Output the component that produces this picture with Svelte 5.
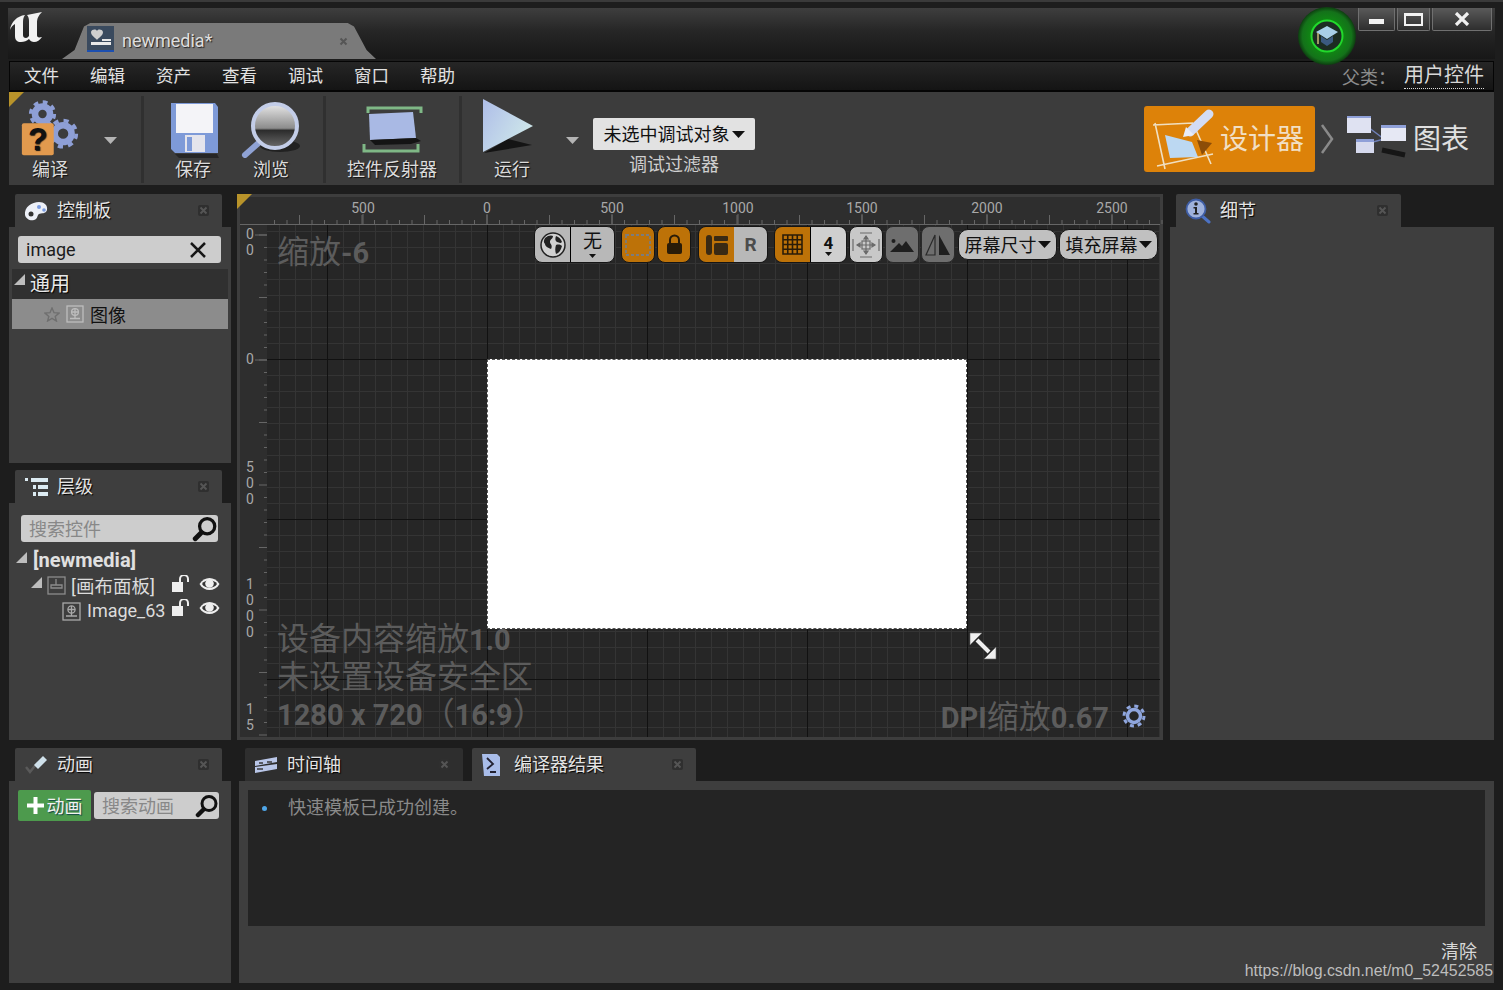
<script>
	const menus = ["文件", "编辑", "资产", "查看", "调试", "窗口", "帮助"];

	// rulers: 500 units = 125px, origin at x=487 / y=359 on the page
	const hTicks = [];
	for (let x = 250 - 12.5 * 17; x < 926; x += 12.5) {
		hTicks.push(x);
	}
	const hLabels = [
		{ x: 126, t: "500" },
		{ x: 250, t: "0" },
		{ x: 375, t: "500" },
		{ x: 501, t: "1000" },
		{ x: 625, t: "1500" },
		{ x: 750, t: "2000" },
		{ x: 875, t: "2500" }
	];
	const vTicks = [];
	for (let y = 135 - 12.5 * 10; y < 512; y += 12.5) {
		vTicks.push(y);
	}
	const vLabels = [
		{ y: 9, t: "0" },
		{ y: 25, t: "0" },
		{ y: 134, t: "0" },
		{ y: 242, t: "5" },
		{ y: 258, t: "0" },
		{ y: 274, t: "0" },
		{ y: 359, t: "1" },
		{ y: 375, t: "0" },
		{ y: 391, t: "0" },
		{ y: 407, t: "0" },
		{ y: 484, t: "1" },
		{ y: 500, t: "5" }
	];
</script>

{#snippet closeX()}
	<svg class="tabx" width="11" height="11" viewBox="0 0 11 11">
		<rect width="11" height="11" rx="2" fill="#2f2f2f" />
		<path d="M2.500 2.500l6 6M8.500 2.500l-6 6" stroke="#555" stroke-width="2" />
	</svg>
{/snippet}

{#snippet imgIcon()}
	<svg width="19" height="19" viewBox="0 0 19 19" fill="none" stroke="#a9a9a9" stroke-width="1.300">
		<rect x="1" y="1" width="17" height="17" />
		<circle cx="9.500" cy="7.500" r="3.600" />
		<path d="M6 7.500h7M9.500 4v7M9.500 11v2.500M4 14h11" />
	</svg>
{/snippet}

{#snippet lock()}
	<svg width="20" height="18" viewBox="0 0 20 18">
		<rect x="1" y="7" width="11" height="10" fill="#eee" />
		<path d="M9 7V4a4 4 0 0 1 8 0v3" fill="none" stroke="#eee" stroke-width="2" />
	</svg>
{/snippet}

{#snippet eye()}
	<svg width="21" height="16" viewBox="0 0 21 16">
		<path d="M0.500 8C5 0 16 0 20.500 8C16 16 5 16 0.500 8Z" fill="#eee" />
		<path d="M3 8C6 3 15 3 18 8C15 13 6 13 3 8Z" fill="#333" />
		<circle cx="10.500" cy="7.500" r="4.300" fill="#eee" />
	</svg>
{/snippet}

{#snippet loupe(size)}
	<svg width={size} height={size} viewBox="0 0 24 24" fill="none" stroke="#111">
		<circle cx="14" cy="9.500" r="7" stroke-width="3" />
		<path d="M8.500 15.500L3 21" stroke-width="4.500" stroke-linecap="round" />
	</svg>
{/snippet}

{#snippet caret()}
	<svg width="13" height="7" viewBox="0 0 13 7"><path d="M0 0h13L6.500 7z" fill="#111" /></svg>
{/snippet}

{#snippet expander()}
	<svg class="exp" width="11" height="11" viewBox="0 0 11 11"><path d="M11 0v11H0z" fill="#bdbdbd" /></svg>
{/snippet}

<div class="window">
	<header class="titlebar">
		<svg class="logo" width="38" height="32" viewBox="0 0 38 32">
			<path
				d="M1 19C2 11 8 5 16 4C14 7 14 9 14 12V24C14 26 15 27 17 27C18 27 19 26 20 25V10C20 7 19 5 18 4L33 1C29 5 28 8 28 12V24C28 26 29 27 33 26C31 29 28 31 25 31C23 31 21 30 20 28C18 30 15 31 12 31C8 31 6 29 6 25V13C4 14 2 16 1 19Z"
				fill="#f2f2f2"
			/>
		</svg>
		<div class="doctab">
			<svg width="27" height="26" viewBox="0 0 27 26">
				<rect width="27" height="26" fill="#3a4a5e" />
				<rect y="24" width="27" height="2" fill="#1c4fb0" />
				<path d="M4 6c1-3 5-3 6-1 1-2 5-2 6 1 0 4-5 6-6 8-1-2-6-4-6-8z" fill="#cfcfcf" />
				<path d="M15 13h9v2h-9zM4 16h20v3H4z" fill="#e8e8e8" />
			</svg>
			<span class="docname">newmedia*</span>
			{@render closeX()}
		</div>
		<div class="tutorial">
			<svg width="60" height="60" viewBox="0 0 60 60">
				<defs>
					<radialGradient id="halo">
						<stop offset="0.5" stop-color="#0f8a12" />
						<stop offset="0.85" stop-color="#14721a" />
						<stop offset="1" stop-color="#0d3d10" />
					</radialGradient>
				</defs>
				<circle cx="30" cy="30" r="29" fill="url(#halo)" />
				<circle cx="30" cy="30" r="15.500" fill="#1c2c22" stroke="#22d82c" stroke-width="2" />
				<path d="M19 26l11-6 11 6-11 7z" fill="#a8cfe8" />
				<path d="M24 30v6l6 4 6-4v-6l-6 4z" fill="#3b5a80" />
				<path d="M21 27v11" stroke="#c8b878" stroke-width="1.500" />
			</svg>
		</div>
		<div class="winbtns">
			<button class="wb min"><i></i></button>
			<button class="wb max"><i></i></button>
			<button class="wb close">
				<svg width="16" height="14" viewBox="0 0 16 14"><path d="M2 1l12 12M14 1L2 13" stroke="#f0f0f0" stroke-width="3.200" /></svg>
			</button>
		</div>
	</header>

	<nav class="menubar">
		{#each menus as m}
			<span class="menu">{m}</span>
		{/each}
		<span class="parent">父类：</span>
		<span class="parentval">用户控件</span>
	</nav>

	<section class="toolbar">
		<i class="corner"></i>
		<div class="tool compile">
			<svg width="60" height="60" viewBox="0 0 64 60">
				<g fill="none" stroke="#8e9fd6">
					<circle cx="24" cy="15" r="8" stroke-width="7" />
					<circle cx="24" cy="15" r="12.500" stroke-width="4" stroke-dasharray="5 4.800" />
					<circle cx="46" cy="36" r="9" stroke-width="7" />
					<circle cx="46" cy="36" r="14" stroke-width="4" stroke-dasharray="5.500 5.500" />
				</g>
				<rect x="2" y="25" width="34" height="34" rx="2" fill="#e29a4e" />
				<text x="19" y="53" text-anchor="middle" class="qmark">?</text>
			</svg>
			<span>编译</span>
		</div>
		<svg class="drop" width="13" height="7" viewBox="0 0 13 7"><path d="M0 0h13L6.500 7z" fill="#b4b4b4" /></svg>
		<i class="sep s1"></i>
		<div class="tool save">
			<svg width="52" height="56" viewBox="0 0 52 56">
				<path d="M4 1h44l3 4v46H8l-4-4z" fill="#7e9ad8" />
				<rect x="9" y="2" width="37" height="29" fill="#f4f4f8" />
				<rect x="18" y="33" width="20" height="17" fill="#e4e4ec" />
				<rect x="20" y="35" width="5" height="14" fill="#7e9ad8" />
				<path d="M8 52h42l2 4H12z" fill="#1c1c1c" opacity="0.700" />
			</svg>
			<span>保存</span>
		</div>
		<div class="tool browse">
			<svg width="62" height="56" viewBox="0 0 62 56">
				<defs>
					<linearGradient id="lens" x1="0" y1="0" x2="0" y2="1">
						<stop offset="0" stop-color="#e8e8e8" />
						<stop offset="0.550" stop-color="#8c8c8c" />
						<stop offset="0.600" stop-color="#2c2c2c" />
						<stop offset="1" stop-color="#6c6c6c" />
					</linearGradient>
				</defs>
				<ellipse cx="40" cy="44" rx="20" ry="6" fill="#1a1a1a" opacity="0.800" />
				<path d="M5 53l17-15" stroke="#8fa2d4" stroke-width="6" stroke-linecap="round" />
				<circle cx="35" cy="24" r="22" fill="url(#lens)" stroke="#c3cde8" stroke-width="4" />
			</svg>
			<span>浏览</span>
		</div>
		<i class="sep s2"></i>
		<div class="tool reflector">
			<svg width="62" height="56" viewBox="0 0 62 56">
				<path d="M7 11V6h53v5" fill="none" stroke="#7fb886" stroke-width="3" />
				<path d="M3 42v7h54v-7" fill="none" stroke="#7fb886" stroke-width="3" />
				<path d="M8 12l44-2 3 26-46 2z" fill="#a9b9e4" />
				<path d="M9 38l46-2 5 3-10 3-36 1z" fill="#141414" />
			</svg>
			<span>控件反射器</span>
		</div>
		<i class="sep s3"></i>
		<div class="tool run">
			<svg width="52" height="58" viewBox="0 0 52 58">
				<defs>
					<linearGradient id="play" x1="0" y1="0" x2="1" y2="0.600">
						<stop offset="0" stop-color="#aebde8" />
						<stop offset="1" stop-color="#cfe8ea" />
					</linearGradient>
				</defs>
				<path d="M2 55l48-8-24-6z" fill="#141414" />
				<path d="M1 1l50 27L1 54z" fill="url(#play)" />
			</svg>
			<span>运行</span>
		</div>
		<svg class="drop d2" width="13" height="7" viewBox="0 0 13 7"><path d="M0 0h13L6.500 7z" fill="#b4b4b4" /></svg>
		<div class="debug">
			<button class="debugsel"><span class="lift">未选中调试对象</span>{@render caret()}</button>
			<span>调试过滤器</span>
		</div>

		<div class="modes">
			<div class="mode designer">
				<svg width="62" height="66" viewBox="0 0 62 66">
					<path d="M0 19l40-2M2 17l10 46M4 60l56-12M40 17l18 41" stroke="#f0dfc0" stroke-width="1.600" fill="none" />
					<path d="M12 29l27 7 6 15-28 1z" fill="#bcd8f2" />
					<path d="M44 34l15 3-10 12z" fill="#8c4d08" />
					<path d="M37 26L56 8" stroke="#d3dcf4" stroke-width="9" stroke-linecap="round" />
					<path d="M30 31l3-10 8 8z" fill="#e8ecf8" />
				</svg>
				<span class="modet">设计器</span>
			</div>
			<svg class="chev" width="14" height="30" viewBox="0 0 14 30"><path d="M2 1l10 14L2 29" fill="none" stroke="#8a8a8a" stroke-width="2.500" /></svg>
			<div class="mode graph">
				<svg width="62" height="44" viewBox="0 0 62 44">
					<path d="M22 12l16 12M16 30l22-6" stroke="#6f80b8" stroke-width="1.500" />
					<path d="M36 35l23 5" stroke="#161616" stroke-width="5" />
					<rect x="1" y="1" width="24" height="17" fill="#dfe2f2" />
					<rect x="1" y="1" width="24" height="2" fill="#8fa0d8" />
					<rect x="35" y="10" width="25" height="16" fill="#e6e8f4" />
					<rect x="35" y="10" width="25" height="3" fill="#8fa0d8" />
					<rect x="10" y="24" width="18" height="14" fill="#d6daee" />
					<rect x="10" y="24" width="18" height="3" fill="#8fa0d8" />
				</svg>
				<span class="modet">图表</span>
			</div>
		</div>
	</section>

	<main class="columns">
		<div class="leftcol">
			<section class="panel palette">
				<div class="tabrow">
					<div class="tab">
						<svg width="24" height="20" viewBox="0 0 24 20">
							<path d="M1 14C0 6 8 1 15 1c5 0 9 3 8 8-1 4-6 3-8 4-2 1-1 5-5 6-4 1-8-1-9-5z" fill="#edf0f8" />
							<circle cx="15" cy="6" r="2" fill="#7a9be0" />
							<circle cx="20" cy="9" r="1.800" fill="#7a9be0" />
							<circle cx="7" cy="13" r="2.500" fill="#333" />
						</svg>
						<span class="tabt">控制板</span>
						{@render closeX()}
					</div>
				</div>
				<div class="body">
					<div class="search s-palette">
						<span class="val">image</span>
						<svg width="18" height="18" viewBox="0 0 18 18"><path d="M2 2l14 14M16 2L2 16" stroke="#161616" stroke-width="2.500" /></svg>
					</div>
					<div class="cat">{@render expander()}<span>通用</span></div>
					<div class="item">
						<svg width="16" height="15" viewBox="0 0 16 15"><path d="M8 1l2 4.700 5 .4-3.800 3.300L12.400 14 8 11.400 3.600 14l1.200-4.600L1 6.100l5-.4z" fill="none" stroke="#6f6f6f" stroke-width="1.400" /></svg>
						<svg width="18" height="18" viewBox="0 0 18 18" fill="none" stroke="#bdbdbd" stroke-width="1.300">
							<rect x="1" y="1" width="16" height="16" />
							<circle cx="9" cy="7" r="3.400" />
							<path d="M5.500 7h7M9 3.600v7M9 10.500v2.500M4 13.500h10" />
						</svg>
						<span>图像</span>
					</div>
				</div>
			</section>

			<section class="panel hierarchy">
				<div class="tabrow">
					<div class="tab">
						<svg width="24" height="20" viewBox="0 0 24 20">
							<path d="M1 1h3v3H1zM7 1h17v4H7zM9 8h3v4H9zM14 8h10v4H14zM9 15h3v4H9zM14 15h10v4H14z" fill="#dcebf2" />
						</svg>
						<span class="tabt">层级</span>
						{@render closeX()}
					</div>
				</div>
				<div class="body">
					<div class="search s-tree">
						<span class="ph">搜索控件</span>
						{@render loupe(26)}
					</div>
					<div class="row root">{@render expander()}<b>[newmedia]</b></div>
					<div class="row child">
						{@render expander()}
						<svg width="19" height="19" viewBox="0 0 19 19" fill="none" stroke="#8c8c8c" stroke-width="1.300">
							<rect x="1" y="1" width="17" height="17" />
							<path d="M4 9h11v3H4zM9 3v6" />
						</svg>
						<span class="lift">[画布面板]</span>
						<em class="rowicons">{@render lock()}{@render eye()}</em>
					</div>
					<div class="row leaf">
						{@render imgIcon()}
						<span class="lift">Image_63</span>
						<em class="rowicons">{@render lock()}{@render eye()}</em>
					</div>
				</div>
			</section>
		</div>

		<section class="designer-panel">
			<i class="corner"></i>
			<div class="hruler">
				<svg width="926" height="29">
					{#each hTicks as x, i}
						<line x1={x} x2={x} y1={i % 5 === 2 ? 20 : 25} y2="29" stroke="#666" />
					{/each}
					{#each hLabels as l}
						<line x1={l.x} x2={l.x} y1="19" y2="29" stroke="#666" />
						<text x={l.x} y="18" text-anchor="middle" class="rl">{l.t}</text>
					{/each}
				</svg>
			</div>
			<div class="stage">
				<div class="vruler">
					<svg width="27" height="512">
						{#each vTicks as y, i}
							<line x1={i % 5 === 0 ? 19 : 24} x2="27" y1={y} y2={y} stroke="#666" />
						{/each}
						{#each vLabels as l}
							<text x="10" y={l.y + 5} text-anchor="middle" class="rl">{l.t}</text>
						{/each}
						<line x1="15" x2="27" y1="10" y2="10" stroke="#666" />
						<line x1="15" x2="27" y1="135" y2="135" stroke="#666" />
					</svg>
				</div>
				<div class="viewport">
					<div class="screen"></div>
					<svg class="resize" width="28" height="28" viewBox="0 0 28 28">
						<path d="M8 8L20 20" stroke="#f0f0f0" stroke-width="4" />
						<path d="M1 1h12L1 13zM27 27H15L27 15z" fill="#f0f0f0" stroke="#666" stroke-width="0.600" />
					</svg>
					<div class="zoomtxt">缩放<b>-6</b></div>
					<div class="infotxt">
						<div>设备内容缩放<b>1.0</b></div>
						<div>未设置设备安全区</div>
						<div><b>1280 x 720</b>（<b>16:9</b>）</div>
					</div>
					<div class="dpi">
						<span><b>DPI</b>缩放<b>0.67</b></span>
						<svg width="24" height="24" viewBox="0 0 24 24" fill="none" stroke="#8fa6de">
							<circle cx="12" cy="12" r="6.500" stroke-width="3.500" />
							<circle cx="12" cy="12" r="10" stroke-width="3" stroke-dasharray="4 3.850" />
						</svg>
					</div>

					<div class="vpbar">
						<div class="vb light split w81">
							<span class="seg sw">
								<svg width="28" height="28" viewBox="0 0 28 28">
									<circle cx="14" cy="14" r="12" fill="#d0d0d0" stroke="#222" stroke-width="1.500" />
									<path d="M6 7c3-3 7-3 8-2 0 3-3 3-3 6 0 2 3 3 1 7-3-1-6-3-6-5-2-2-1-4 0-6zM17 5c3 1 5 3 6 6-2 2-3 0-5 0-2-1-2-4-1-6zM17 14c3-1 5 0 6 1-1 4-3 7-6 8-1-3-1-6 0-9z" fill="#222" />
								</svg>
							</span>
							<span class="seg sn"><span class="nv">无</span><svg width="7" height="4" viewBox="0 0 7 4"><path d="M0 0h7L3.500 4z" fill="#111" /></svg></span>
						</div>
						<div class="vb on sq g6">
							<svg width="28" height="24" viewBox="0 0 28 24"><rect x="2" y="2" width="24" height="20" fill="none" stroke="#7c7c7c" stroke-width="1.800" stroke-dasharray="3 2" /></svg>
						</div>
						<div class="vb on sq">
							<svg width="17" height="21" viewBox="0 0 17 21"><path d="M4 9V6a4.500 4.500 0 0 1 9 0v3" fill="none" stroke="#2a1c08" stroke-width="2" /><rect x="1" y="9" width="15" height="11" rx="2" fill="#2a1c08" /></svg>
						</div>
						<div class="vb split w70 g7">
							<span class="seg on s-35">
								<svg width="24" height="22" viewBox="0 0 24 22" fill="#3a2a14"><rect x="1" y="1" width="6" height="20" rx="3" /><rect x="9" y="2" width="14" height="5" rx="1" /><rect x="9" y="9" width="14" height="12" rx="2" /></svg>
							</span>
							<span class="seg light s-r">R</span>
						</div>
						<div class="vb split w73 g6">
							<span class="seg on s-36">
								<svg width="21" height="21" viewBox="0 0 21 21" fill="none" stroke="#2a1c08" stroke-width="1.600"><path d="M1 1h19v19H1zM5.750 1v19M10.500 1v19M15.250 1v19M1 5.750h19M1 10.500h19M1 15.250h19" /></svg>
							</span>
							<span class="seg s-n"><b>4</b><svg width="7" height="4" viewBox="0 0 7 4"><path d="M0 0h7L3.500 4z" fill="#111" /></svg></span>
						</div>
						<div class="vb pale sq">
							<svg width="28" height="26" viewBox="0 0 28 26" fill="none" stroke="#6a6a6a" stroke-width="1.200">
								<path d="M1 7v12M27 7v12M8 1h12M8 25h12M14 4v18M5 13h18" />
								<path d="M14 4l-2 3h4zM14 22l-2-3h4zM5 13l3-2v4zM23 13l-3-2v4z" fill="#6a6a6a" />
								<rect x="10" y="9" width="8" height="8" />
							</svg>
						</div>
						<div class="vb dim sq">
							<svg width="24" height="14" viewBox="0 0 24 14"><path d="M0 14L9 5l3 3 4-5 8 11z" fill="#1f1f1f" /><circle cx="3.500" cy="3" r="2" fill="#1f1f1f" /></svg>
						</div>
						<div class="vb dim sq">
							<svg width="26" height="22" viewBox="0 0 26 22"><path d="M10 1v20H1z" fill="none" stroke="#2a2a2a" stroke-width="1.200" /><path d="M14 1l11 20H14z" fill="#1f1f1f" /></svg>
						</div>
						<div class="vb light pill g3"><span class="lift">屏幕尺寸</span>{@render caret()}</div>
						<div class="vb light pill"><span class="lift">填充屏幕</span>{@render caret()}</div>
					</div>
				</div>
			</div>
		</section>

		<section class="panel details">
			<div class="tabrow">
				<div class="tab">
					<svg width="26" height="26" viewBox="0 0 26 26">
						<path d="M16 17l8 7" stroke="#4c72c4" stroke-width="3" stroke-linecap="round" />
						<circle cx="11" cy="11" r="9.500" fill="#9fb2dc" stroke="#3f5ea6" stroke-width="1.800" />
						<circle cx="11" cy="6" r="1.800" fill="#222" />
						<path d="M8.500 9h3.500v6h1.500v1.500H8.500V15H10v-4.500H8.500z" fill="#222" />
					</svg>
					<span class="tabt">细节</span>
					{@render closeX()}
				</div>
			</div>
			<div class="body"></div>
		</section>
	</main>

	<footer class="bottom">
		<section class="panel anim">
			<div class="tabrow">
				<div class="tab">
					<svg width="24" height="20" viewBox="0 0 24 20">
						<path d="M2 12l4 5L14 7" fill="none" stroke="#5a5a5a" stroke-width="2.500" />
						<path d="M10 10l9-9 4 4-9 9z" fill="#cfe0ea" />
					</svg>
					<span class="tabt">动画</span>
					{@render closeX()}
				</div>
			</div>
			<div class="body">
				<div class="animbar">
					<button class="addanim">
						<svg width="17" height="17" viewBox="0 0 17 17"><path d="M6.500 0h4v6.500H17v4h-6.500V17h-4v-6.500H0v-4h6.500z" fill="#fff" /></svg>
						<span class="lift">动画</span>
					</button>
					<div class="search s-anim">
						<span class="ph">搜索动画</span>
						{@render loupe(24)}
					</div>
				</div>
			</div>
		</section>

		<section class="panel output">
			<div class="tabrow">
				<div class="tab off">
					<svg width="24" height="18" viewBox="0 0 24 18">
						<path d="M1 5l22-4v5l-22 4zM1 11l22-3v5l-22 4z" fill="#b9c6e8" />
						<path d="M5 7h4M13 6h5M3 13h6" stroke="#3a3a3a" stroke-width="1.500" />
					</svg>
					<span class="tabt">时间轴</span>
					{@render closeX()}
				</div>
				<div class="tab wide">
					<svg width="20" height="24" viewBox="0 0 20 24">
						<path d="M1 1h15l3 3v19H3z" fill="#a9bdea" />
						<path d="M6 5l6 6-6 5M9 19h6" fill="none" stroke="#223" stroke-width="1.800" />
					</svg>
					<span class="tabt">编译器结果</span>
					{@render closeX()}
				</div>
			</div>
			<div class="body">
				<div class="log">
					<i class="dot"></i>
					<span>快速模板已成功创建。</span>
				</div>
				<div class="clear">清除</div>
				<div class="url">https://blog.csdn.net/m0_52452585</div>
			</div>
		</section>
	</footer>
</div>

<style>
	:global(body) {
		margin: 0;
		background: #1c1c1c;
	}
	.window {
		width: 1503px;
		height: 990px;
		overflow: hidden;
		box-sizing: border-box;
		padding: 0 9px 7px;
		background: #1d1d1d;
		border-top: 2px solid #3a3a3a;
		font-family: "Roboto", "Noto Sans CJK SC", sans-serif;
		color: #ddd;
	}
	.window i,
	.window em {
		font-style: normal;
	}
	button {
		font: inherit;
		border: 0;
		padding: 0;
	}
	.lift {
		padding-bottom: 2px;
	}

	/* title bar */
	.titlebar {
		position: relative;
		height: 51px;
		margin: 6px -1px 0;
		padding-left: 1px;
		display: flex;
		align-items: flex-end;
		background: linear-gradient(#3e3e3e, #262626 45%, #171717);
	}
	.logo {
		align-self: flex-start;
		margin-top: 3px;
	}
	.doctab {
		width: 314px;
		height: 36px;
		margin-left: 15px;
		box-sizing: border-box;
		padding: 3px 0 0 25px;
		display: flex;
		align-items: flex-start;
		background: #7a7a7a;
		clip-path: polygon(0 100%, 4% 75%, 7% 10%, 9% 0, 91% 0, 93% 10%, 97% 75%, 100% 100%);
	}
	.docname {
		margin: 4px 0 0 8px;
		font-size: 18px;
		color: #dedede;
		text-shadow: 1px 1px 1px #222;
		flex: 1;
	}
	.doctab .tabx {
		margin: 10px 27px 0 0;
	}
	.doctab .tabx rect {
		fill: none;
	}
	.tutorial {
		position: absolute;
		left: 1289px;
		top: -2px;
	}
	.winbtns {
		position: absolute;
		right: 3px;
		top: 0;
		display: flex;
		gap: 2px;
	}
	.wb {
		height: 23px;
		display: flex;
		align-items: center;
		justify-content: center;
		box-sizing: border-box;
		background: linear-gradient(#5a5a5a, #2e2e2e);
		border: 1px solid #707070;
		border-top: 0;
		border-radius: 0 0 2px 2px;
	}
	.min {
		width: 37px;
	}
	.min i {
		width: 15px;
		height: 5px;
		background: #f2f2f2;
		margin-top: 4px;
	}
	.max {
		width: 33px;
	}
	.max i {
		width: 15px;
		height: 8px;
		border: 2.500px solid #f2f2f2;
		border-top-width: 3px;
	}
	.close {
		width: 60px;
	}

	/* menu */
	.menubar {
		height: 31px;
		margin-top: 2px;
		box-sizing: border-box;
		padding: 0 0 3px 14px;
		display: flex;
		align-items: center;
		gap: 31px;
		background: linear-gradient(#262626, #141414);
		border: 1px solid #050505;
		border-width: 1px 1px 2px;
		font-size: 17.500px;
	}
	.menu {
		color: #e2e2e2;
	}
	.parent {
		margin: 2px -23px 0 auto;
		font-size: 18px;
		color: #8c8c8c;
	}
	.parentval {
		margin: 3px 9px 0 0;
		font-size: 20px;
		line-height: 25px;
		color: #d8d8d8;
		border-bottom: 1px dotted #ddd;
	}

	/* toolbar */
	.toolbar {
		position: relative;
		height: 93px;
		margin-top: 0;
		background: #3c3c3c;
		display: flex;
		align-items: flex-start;
	}
	.corner {
		position: absolute;
		left: 0;
		top: 0;
		width: 15px;
		height: 15px;
		background: #b8932a;
		clip-path: polygon(0 0, 100% 0, 0 100%);
	}
	.tool {
		display: flex;
		flex-direction: column;
		align-items: center;
		font-size: 18px;
		color: #dcdcdc;
		text-shadow: 1px 1px 1px #111;
	}
	.tool span {
		line-height: 22px;
		margin-top: 1px;
	}
	.compile {
		width: 60px;
		margin: 6px 0 0 11px;
	}
	.qmark {
		font: bold 34px "Liberation Sans", sans-serif;
		fill: #111;
	}
	.drop {
		margin: 45px 0 0 24px;
	}
	.sep {
		width: 3px;
		height: 87px;
		margin-top: 4px;
		background: #303030;
	}
	.s1 {
		margin-left: 24px;
	}
	.save {
		width: 52px;
		margin: 10px 0 0 23px;
	}
	.browse {
		width: 62px;
		margin: 10px 0 0 21px;
	}
	.s2 {
		margin-left: 21px;
	}
	.reflector {
		width: 92px;
		margin: 10px 0 0 20px;
	}
	.s3 {
		margin-left: 21px;
	}
	.run {
		width: 52px;
		margin: 6px 0 0 20px;
	}
	.run span {
		margin: 3px 0 0 8px;
	}
	.d2 {
		margin: 45px 0 0 32px;
	}
	.debug {
		margin: 26px 0 0 14px;
		display: flex;
		flex-direction: column;
		align-items: center;
		font-size: 18px;
		color: #cfcfcf;
	}
	.debugsel {
		width: 162px;
		height: 32px;
		display: flex;
		align-items: center;
		justify-content: center;
		gap: 2px;
		background: #e2e2e2;
		color: #111;
		border-radius: 2px;
	}
	.modes {
		margin: 14px 0 0 auto;
		padding-right: 25px;
		display: flex;
		align-items: center;
	}
	.mode {
		display: flex;
		align-items: center;
		font-size: 28px;
		color: #e0e0e0;
	}
	.modet {
		padding-bottom: 4px;
	}
	.designer {
		width: 171px;
		height: 66px;
		box-sizing: border-box;
		padding-left: 9px;
		gap: 5px;
		background: #dd8209;
		border-radius: 3px;
		color: #f1dfc4;
	}
	.chev {
		margin: 0 12px 0 5px;
	}
	.graph {
		gap: 5px;
		height: 66px;
	}
	.graph svg {
		margin-top: -4px;
	}

	/* three columns */
	.columns {
		display: grid;
		grid-template-columns: 222px 926px 324px;
		grid-template-rows: 546px;
		column-gap: 6px;
		height: 546px;
		margin-top: 9px;
	}
	.leftcol {
		display: flex;
		flex-direction: column;
		gap: 7px;
	}
	.panel {
		display: flex;
		flex-direction: column;
	}
	.palette {
		height: 269px;
	}
	.hierarchy {
		height: 270px;
	}
	.tabrow {
		height: 33px;
		flex: none;
		padding-left: 6px;
		display: flex;
		gap: 9px;
	}
	.tab {
		width: 207px;
		box-sizing: border-box;
		padding: 0 13px 0 9px;
		display: flex;
		align-items: center;
		gap: 9px;
		background: #3e3e3e;
		border-radius: 2px 2px 0 0;
	}
	.tab.off {
		width: 218px;
		background: #2e2e2e;
	}
	.tab.wide {
		width: 224px;
		gap: 13px;
	}
	.tabt {
		flex: 1;
		padding-bottom: 3px;
		font-size: 18px;
		color: #e4e4e4;
		text-shadow: 1px 1px 1px #000;
	}
	.tabx {
		flex: none;
	}
	.body {
		flex: 1;
		background: #3e3e3e;
		position: relative;
	}
	.search {
		display: flex;
		align-items: center;
		justify-content: space-between;
		box-sizing: border-box;
		background: #cdcdcd;
		border-radius: 3px;
		font-size: 18px;
		color: #888;
	}
	.ph {
		padding-bottom: 2px;
	}
	.s-palette {
		height: 27px;
		margin: 9px 10px 6px 9px;
		padding: 0 14px 0 8px;
	}
	.s-palette .val {
		color: #1c1c1c;
	}
	.cat {
		height: 30px;
		margin: 0 3px;
		display: flex;
		align-items: center;
		gap: 5px;
		padding: 0 0 3px 2px;
		box-sizing: border-box;
		background: #303030;
		font-size: 20px;
		color: #e8e8e8;
		text-shadow: 1px 1px 1px #000;
	}
	.exp {
		flex: none;
		margin-bottom: 6px;
	}
	.item {
		height: 30px;
		margin: 0 3px;
		padding-left: 32px;
		display: flex;
		align-items: center;
		gap: 6px;
		background: #8c8c8c;
		font-size: 18px;
		color: #111;
	}
	.s-tree {
		height: 27px;
		margin: 12px 13px 3px 12px;
		padding: 0 0 0 8px;
	}
	.row {
		position: relative;
		display: flex;
		align-items: center;
		color: #dcdcdc;
	}
	.root {
		height: 30px;
		padding-left: 7px;
		gap: 6px;
		font-size: 20px;
		margin-bottom: -3px;
	}
	.root b {
		font-weight: 700;
		color: #e0e0e0;
	}
	.child {
		height: 27px;
		padding-left: 22px;
		gap: 5px;
		font-size: 18.500px;
	}
	.leaf {
		height: 24px;
		padding-left: 53px;
		gap: 6px;
		font-size: 18px;
	}
	.rowicons {
		position: absolute;
		right: 11px;
		top: 3px;
		display: flex;
		align-items: center;
		gap: 8px;
	}
	.leaf .rowicons {
		top: 0;
	}

	/* designer */
	.designer-panel {
		position: relative;
		box-sizing: border-box;
		min-height: 0;
		background: #2e2e2e;
		border: 3px solid #3d3d3d;
		display: flex;
		flex-direction: column;
	}
	.designer-panel .corner {
		left: -3px;
		top: -3px;
	}
	.hruler {
		height: 27px;
		flex: none;
		margin-left: -3px;
		margin-right: -3px;
		overflow: hidden;
	}
	.hruler svg {
		display: block;
		margin-top: -2px;
	}
	.rl {
		font: 14px "Roboto", sans-serif;
		fill: #a8a8a8;
	}
	.stage {
		flex: 1;
		display: flex;
		min-height: 0;
		border-top: 1px solid #666;
	}
	.vruler {
		width: 27px;
		flex: none;
		overflow: hidden;
	}
	.viewport {
		position: relative;
		flex: 1;
		overflow: hidden;
		background-color: #262626;
		background-image:
			linear-gradient(#111 1px, transparent 1px),
			linear-gradient(90deg, #111 1px, transparent 1px),
			linear-gradient(#343434 1px, transparent 1px),
			linear-gradient(90deg, #343434 1px, transparent 1px);
		background-size: 100% 160px, 160px 100%, 100% 16px, 16px 100%;
		background-position: 0 134px, 60px 0, 0 6px, 12px 0;
	}
	.screen {
		position: absolute;
		left: 220px;
		top: 134px;
		width: 480px;
		height: 270px;
		box-sizing: border-box;
		background: #fff;
		border: 1px dashed #555;
	}
	.resize {
		position: absolute;
		left: 702px;
		top: 407px;
	}
	.zoomtxt,
	.infotxt,
	.dpi {
		position: absolute;
		font-size: 32px;
		color: #5c5c5c;
	}
	.zoomtxt b,
	.infotxt b,
	.dpi b {
		font-size: 29px;
	}
	.zoomtxt {
		left: 10px;
		top: 1px;
	}
	.infotxt {
		left: 10px;
		top: 395px;
		line-height: 38px;
		white-space: nowrap;
	}
	.infotxt div {
		height: 37.500px;
	}
	.dpi {
		right: 14px;
		top: 466px;
		display: flex;
		align-items: center;
		gap: 13px;
	}
	.dpi svg {
		margin-top: 4px;
	}
	.vpbar {
		position: absolute;
		left: 267px;
		top: 1px;
		display: flex;
		align-items: center;
		gap: 2px;
	}
	.vb {
		height: 37px;
		box-sizing: border-box;
		flex: none;
		border-radius: 8px;
		border: 1px solid #151515;
		display: flex;
		align-items: center;
		justify-content: center;
		overflow: hidden;
		font-size: 18px;
		color: #111;
	}
	.light {
		background: #b8b8b8;
	}
	.pale {
		background: #c8c8c8;
	}
	.on {
		background: #bd7208;
	}
	.dim {
		background: #6e6e6e;
		border-color: #2a2a2a;
	}
	.sq {
		width: 34px;
	}
	.split {
		padding: 0;
		align-items: stretch;
	}
	.w81 {
		width: 81px;
	}
	.w70 {
		width: 70px;
	}
	.w73 {
		width: 73px;
	}
	.g3 {
		margin-left: 1px;
	}
	.g6 {
		margin-left: 4px;
	}
	.g7 {
		margin-left: 5px;
	}
	.seg {
		display: flex;
		align-items: center;
		justify-content: center;
		box-sizing: border-box;
	}
	.sw {
		width: 36px;
		border-right: 1px solid #000;
	}
	.sn {
		flex: 1;
		flex-direction: column;
		gap: 1px;
	}
	.nv {
		font-size: 19px;
		line-height: 22px;
	}
	.s-35 {
		width: 35px;
	}
	.s-r {
		flex: 1;
		font-weight: 700;
		font-size: 19px;
		color: #4c4c4c;
	}
	.s-36 {
		width: 36px;
		border-right: 1px solid #000;
	}
	.s-n {
		flex: 1;
		flex-direction: column;
		font-size: 17px;
		line-height: 18px;
		background: #cfcfcf;
	}
	.pill {
		width: 99px;
		height: 31px;
		border-radius: 10px;
		gap: 1px;
		white-space: nowrap;
		background: #c0c0c0;
	}
	.details {
		margin: 0 -1px 0 1px;
	}
	.details .tab {
		width: 225px;
	}

	/* bottom */
	.bottom {
		display: grid;
		grid-template-columns: 222px 1255px;
		column-gap: 8px;
		height: 235px;
		margin-top: 8px;
	}
	.animbar {
		display: flex;
		align-items: flex-start;
		gap: 3px;
		padding: 9px 0 0 9px;
	}
	.addanim {
		width: 73px;
		height: 31px;
		display: flex;
		align-items: center;
		justify-content: center;
		gap: 3px;
		background: #4d9a4d;
		color: #f2f2f2;
		font-size: 18px;
		border-radius: 2px;
		text-shadow: 1px 1px 1px #144;
	}
	.s-anim {
		width: 125px;
		height: 27px;
		margin-top: 2px;
		padding-left: 8px;
	}
	.log {
		height: 136px;
		margin: 9px 9px 0;
		box-sizing: border-box;
		padding: 6px 0 0 14px;
		display: flex;
		align-items: flex-start;
		gap: 21px;
		background: #242424;
		font-size: 18px;
		line-height: 24px;
		color: #8a8a8a;
	}
	.dot {
		width: 5px;
		height: 5px;
		margin-top: 10px;
		border-radius: 50%;
		background: #4fa6e8;
	}
	.clear {
		margin: 14px 17px 0 0;
		text-align: right;
		font-size: 18px;
		line-height: 24px;
		color: #d8d8d8;
	}
	.url {
		text-align: right;
		margin: -3px 1px 0 0;
		font: 15.900px/20px "Liberation Sans", sans-serif;
		color: #bdbdbd;
	}
</style>
